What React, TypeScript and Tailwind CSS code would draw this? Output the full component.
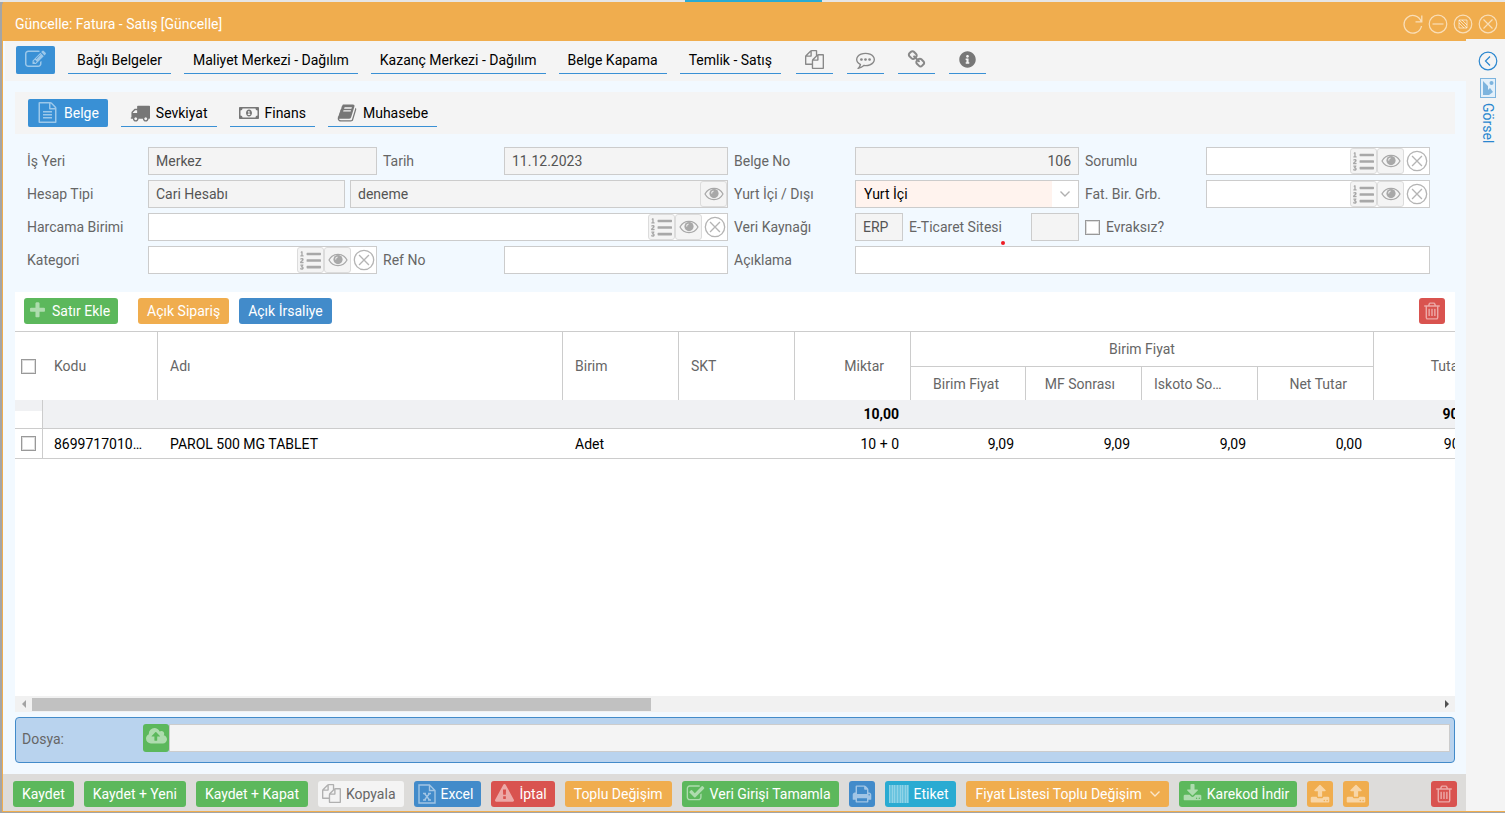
import { useState } from "react";
import type { ReactNode } from "react";
import clsx from "clsx";
import { FaListOl, FaRegMoneyBillAlt, FaInfoCircle } from "react-icons/fa";

const PATHS = {
  edit: "M888 1184l116-116-152-152-116 116v56h96v96h56zm440-720q-16-16-33 1l-350 350q-17 17-1 33t33-1l350-350q17-17 1-33zm80 594v190q0 119-84.5 203.5t-203.5 84.5h-832q-119 0-203.5-84.5t-84.5-203.5v-832q0-119 84.5-203.5t203.5-84.5h832q63 0 117 25 15 7 18 23 3 17-9 29l-49 49q-14 14-32 8-23-6-45-6h-832q-66 0-113 47t-47 113v832q0 66 47 113t113 47h832q66 0 113-47t47-113v-126q0-13 9-22l64-64q15-15 35-7t20 29zm-96-738l288 288-672 672h-288v-288zm444 132l-92 92-288-288 92-92q28-28 68-28t68 28l152 152q28 28 28 68t-28 68z",
  file: "M1596 380q28 28 48 76t20 88v1152q0 40-28 68t-68 28h-1344q-40 0-68-28t-28-68v-1600q0-40 28-68t68-28h896q40 0 88 20t76 48zm-444-244v376h376q-10-29-22-41l-313-313q-12-12-41-22zm384 1528v-1024h-416q-40 0-68-28t-28-68v-416h-768v1536h1280zm-1024-864q0-14 9-23t23-9h704q14 0 23 9t9 23v64q0 14-9 23t-23 9h-704q-14 0-23-9t-9-23v-64zm736 224q14 0 23 9t9 23v64q0 14-9 23t-23 9h-704q-14 0-23-9t-9-23v-64q0-14 9-23t23-9h704zm0 256q14 0 23 9t9 23v64q0 14-9 23t-23 9h-704q-14 0-23-9t-9-23v-64q0-14 9-23t23-9h704z",
  truck: "M640 1408q0-52-38-90t-90-38-90 38-38 90 38 90 90 38 90-38 38-90zm-384-512h384v-256h-158q-13 0-22 9l-195 195q-9 9-9 22v30zm1280 512q0-52-38-90t-90-38-90 38-38 90 38 90 90 38 90-38 38-90zm256-1088v1024q0 15-4 26.5t-13.5 18.5-16.5 11.5-23.5 6-22.5 2-25.5 0-22.5-.5q0 106-75 181t-181 75-181-75-75-181h-384q0 106-75 181t-181 75-181-75-75-181h-64q-3 0-22.5.5t-25.5 0-22.5-2-23.5-6-16.5-11.5-13.5-18.5-4-26.5q0-26 19-45t45-19v-320q0-8-.5-35t0-38 2.5-34.5 6.5-37 14-30.5 22.5-30l198-198q19-19 50.5-32t58.5-13h160v-192q0-26 19-45t45-19h1024q26 0 45 19t19 45z",
  book: "M1703 478q40 57 18 129l-275 906q-19 64-76.5 107.5t-122.5 43.5h-923q-77 0-148.5-53.5t-99.5-131.5q-24-67-2-127 0-4 3-27t4-37q1-8-3-21.5t-3-19.5q2-11 8-21t16.5-23.5 16.5-23.5q23-38 45-91.5t30-91.5q3-10 .5-30t-.5-28q3-11 17-28t17-23q21-36 42-92t25-90q1-9-2.5-32t.5-28q4-13 22-30.5t22-22.5q19-26 42.5-84.5t27.5-96.5q1-8-3-25.5t-2-26.5q2-8 9-18t18-23 17-21q8-12 16.5-30.5t15-35 16-36 19.5-32 26.5-23.5 36-11.5 47.5 5.5l-1 3q38-9 51-9h761q74 0 114 56t18 130l-274 906q-36 119-71.5 153.5t-128.5 34.5h-869q-27 0-38 15-11 16-1 43 24 70 144 70h923q29 0 56-15.5t35-41.5l300-987q7-22 5-57 38 15 59 43zm-1064 2q-4 13 2 22.5t20 9.5h608q13 0 25.5-9.5t16.5-22.5l21-64q4-13-2-22.5t-20-9.5h-608q-13 0-25.5 9.5t-16.5 22.5zm-83 256q-4 13 2 22.5t20 9.5h608q13 0 25.5-9.5t16.5-22.5l21-64q4-13-2-22.5t-20-9.5h-608q-13 0-25.5 9.5t-16.5 22.5z",
  copy: "M1696 384q40 0 68 28t28 68v1216q0 40-28 68t-68 28h-960q-40 0-68-28t-28-68v-288h-544q-40 0-68-28t-28-68v-672q0-40 20-88t48-76l408-408q28-28 76-48t88-20h416q40 0 68 28t28 68v328q68-40 128-40h416zm-544 213l-299 299h299v-299zm-640-384l-299 299h299v-299zm196 647l316-316v-416h-384v416q0 40-28 68t-68 28h-416v640h512v-256q0-40 20-88t48-76zm956 804v-1152h-384v416q0 40-28 68t-68 28h-416v640h896z",
  comment: "M640 896q0 53-37.5 90.5t-90.5 37.5-90.5-37.5-37.5-90.5 37.5-90.5 90.5-37.5 90.5 37.5 37.5 90.5zm384 0q0 53-37.5 90.5t-90.5 37.5-90.5-37.5-37.5-90.5 37.5-90.5 90.5-37.5 90.5 37.5 37.5 90.5zm384 0q0 53-37.5 90.5t-90.5 37.5-90.5-37.5-37.5-90.5 37.5-90.5 90.5-37.5 90.5 37.5 37.5 90.5zm-512-512q-204 0-381.5 69.5t-282 187.5-104.5 255q0 112 71.5 213.5t201.5 175.5l87 50-27 96q-24 91-70 172 152-63 275-171l43-38 57 6q69 8 130 8 204 0 381.5-69.5t282-187.5 104.5-255-104.5-255-282-187.5-381.5-69.5zm896 512q0 174-120 321.5t-326 233-450 85.5q-70 0-145-8-198 175-460 242-49 14-114 22h-5q-15 0-27-10.5t-16-27.5v-1q-3-4-.5-12t2-10 4.5-9.5l6-9 7-8.5 8-9q7-8 31-34.5t34.5-38 31-39.5 32.5-51 27-59 26-76q-157-89-247.5-220t-90.5-281q0-174 120-321.5t326-233 450-85.5 450 85.5 326 233 120 321.5z",
  link: "M1520 1216q0-40-28-68l-208-208q-28-28-68-28-42 0-72 32 3 3 19 18.5t21.5 21.5 15 19 13 25.5 3.5 27.5q0 40-28 68t-68 28q-15 0-27.5-3.5t-25.5-13-19-15-21.5-21.5-18.5-19q-33 31-33 73 0 40 28 68l206 207q27 27 68 27 40 0 68-26l147-146q28-28 28-67zm-703-705q0-40-28-68l-206-207q-28-28-68-28-39 0-68 27l-147 146q-28 28-28 67 0 40 28 68l208 208q27 27 68 27 42 0 72-31-3-3-19-18.5t-21.5-21.5-15-19-13-25.5-3.5-27.5q0-40 28-68t68-28q15 0 27.5 3.5t25.5 13 19 15 21.5 21.5 18.5 19q33-31 33-73zm895 705q0 120-85 203l-147 146q-83 83-203 83-121 0-204-85l-206-207q-83-83-83-203 0-123 88-209l-88-88q-86 88-208 88-120 0-204-84l-208-208q-84-84-84-204t85-203l147-146q83-83 203-83 121 0 204 85l206 207q83 83 83 203 0 123-88 209l88 88q86-88 208-88 120 0 204 84l208 208q84 84 84 204z",
  plus: "M1600 736v192q0 40-28 68t-68 28h-416v416q0 40-28 68t-68 28h-192q-40 0-68-28t-28-68v-416h-416q-40 0-68-28t-28-68v-192q0-40 28-68t68-28h416v-416q0-40 28-68t68-28h192q40 0 68 28t28 68v416h416q40 0 68 28t28 68z",
  trash: "M704 736v576q0 14-9 23t-23 9h-64q-14 0-23-9t-9-23v-576q0-14 9-23t23-9h64q14 0 23 9t9 23zm256 0v576q0 14-9 23t-23 9h-64q-14 0-23-9t-9-23v-576q0-14 9-23t23-9h64q14 0 23 9t9 23zm256 0v576q0 14-9 23t-23 9h-64q-14 0-23-9t-9-23v-576q0-14 9-23t23-9h64q14 0 23 9t9 23zm128 724v-948h-896v948q0 22 7 40.5t14.5 27 10.5 8.5h832q3 0 10.5-8.5t14.5-27 7-40.5zm-672-1076h448l-48-117q-7-9-17-11h-317q-10 2-17 11zm928 32v64q0 14-9 23t-23 9h-96v948q0 83-47 143.5t-113 60.5h-832q-66 0-113-58.5t-47-141.5v-952h-96q-14 0-23-9t-9-23v-64q0-14 9-23t23-9h309l70-167q15-37 54-63t79-26h320q40 0 79 26t54 63l70 167h309q14 0 23 9t9 23z",
  warning: "M1024 1375v-190q0-14-9.5-23.5t-22.5-9.5h-192q-13 0-22.5 9.5t-9.5 23.5v190q0 14 9.5 23.5t22.5 9.5h192q13 0 22.5-9.5t9.5-23.5zm-2-374l18-459q0-12-10-19-13-11-24-11h-220q-11 0-24 11-10 7-10 21l17 457q0 10 10 16.5t24 6.5h185q14 0 23.5-6.5t10.5-16.5zm-14-934l768 1408q35 63-2 126-17 29-46.5 46t-63.5 17h-1536q-34 0-63.5-17t-46.5-46q-37-63-2-126l768-1408q17-31 47-49t65-18 65 18 47 49z",
  check: "M1472 930v318q0 119-84.5 203.5t-203.5 84.5h-832q-119 0-203.5-84.5t-84.5-203.5v-832q0-119 84.5-203.5t203.5-84.5h832q63 0 117 25 15 7 18 23 3 17-9 29l-49 49q-10 10-23 10-3 0-9-2-23-6-45-6h-832q-66 0-113 47t-47 113v832q0 66 47 113t113 47h832q66 0 113-47t47-113v-254q0-13 9-22l64-64q10-10 23-10 6 0 12 3 20 8 20 29zm231-489l-814 814q-24 24-57 24t-57-24l-430-430q-24-24-24-57t24-57l110-110q24-24 57-24t57 24l263 263 647-647q24-24 57-24t57 24l110 110q24 24 24 57t-24 57z",
  print: "M448 1536h896v-256h-896v256zm0-640h896v-384h-160q-40 0-68-28t-28-68v-160h-640v640zm1152 64q0-26-19-45t-45-19-45 19-19 45 19 45 45 19 45-19 19-45zm128 0v416q0 13-9.5 22.5t-22.5 9.5h-224v160q0 40-28 68t-68 28h-960q-40 0-68-28t-28-68v-160h-224q-13 0-22.5-9.5t-9.5-22.5v-416q0-79 56.5-135.5t135.5-56.5h64v-544q0-40 28-68t68-28h672q40 0 88 20t76 48l152 152q28 28 48 76t20 88v256h64q79 0 135.5 56.5t56.5 135.5z",
  cloud: "M1280 864q0-14-9-23l-352-352q-9-9-23-9t-23 9l-351 351q-10 12-10 24 0 14 9 23t23 9h224v352q0 13 9.5 22.5t22.5 9.5h192q13 0 22.5-9.5t9.5-22.5v-352h224q13 0 22.5-9.5t9.5-22.5zm640 288q0 159-112.5 271.5t-271.5 112.5h-1088q-185 0-316.5-131.5t-131.5-316.5q0-130 70-240t188-165q-2-30-2-43 0-212 150-362t362-150q156 0 285.5 87t188.5 231q71-62 166-62 106 0 181 75t75 181q0 76-41 138 130 31 213.5 135.5t83.5 238.5z",
  download: "M1344 1344q0-26-19-45t-45-19-45 19-19 45 19 45 45 19 45-19 19-45zm256 0q0-26-19-45t-45-19-45 19-19 45 19 45 45 19 45-19 19-45zm128-224v320q0 40-28 68t-68 28h-1472q-40 0-68-28t-28-68v-320q0-40 28-68t68-28h465l135 136q58 56 136 56t136-56l136-136h464q40 0 68 28t28 68zm-325-569q17 41-14 70l-448 448q-18 19-45 19t-45-19l-448-448q-31-29-14-70 17-39 59-39h256v-448q0-26 19-45t45-19h256q26 0 45 19t19 45v448h256q42 0 59 39z",
  upload: "M1344 1472q0-26-19-45t-45-19-45 19-19 45 19 45 45 19 45-19 19-45zm256 0q0-26-19-45t-45-19-45 19-19 45 19 45 45 19 45-19 19-45zm128-224v320q0 40-28 68t-68 28h-1472q-40 0-68-28t-28-68v-320q0-40 28-68t68-28h427q21 56 70.5 92t110.5 36h256q61 0 110.5-36t70.5-92h427q40 0 68 28t28 68zm-325-648q-17 40-59 40h-256v448q0 26-19 45t-45 19h-256q-26 0-45-19t-19-45v-448h-256q-42 0-59-40-17-39 14-69l448-448q18-19 45-19t45 19l448 448q31 30 14 69z",
};

function Icon({ name, className }: { name: keyof typeof PATHS; className?: string }) {
  return (
    <svg
      viewBox={name === "cloud" ? "0 0 1920 1792" : "0 0 1792 1792"}
      className={clsx("shrink-0 fill-current", className)}
      aria-hidden="true"
    >
      <path d={PATHS[name]} />
    </svg>
  );
}

function EyeIcon() {
  return (
    <svg viewBox="0 0 20 14" className="h-[14px] w-5" fill="none" aria-hidden="true">
      <path d="M1 7C5 -0.4 15 -0.4 19 7C15 14.4 5 14.4 1 7Z" stroke="#a8a8a8" strokeWidth="1.2" />
      <circle cx="10" cy="6.6" r="4.6" fill="#a8a8a8" />
      <path d="M7.6 6.4a2.4 2.4 0 0 1 2-2.4" stroke="#f0f0f0" strokeWidth="1.2" />
    </svg>
  );
}

// sheet with a folded corner and a small cross with feet
function ExcelIcon() {
  return (
    <svg viewBox="0 0 18 20" className="h-5 w-[18px] fill-none stroke-white/50" strokeWidth="1.4" aria-hidden="true">
      <path d="M1 1h10.500l5.500 5.500V19H1zM11.500 1v5.500H17" />
      <path d="M6.500 9.500l5 6.500M11.500 9.500l-5 6.500M5 9.500h3M10 9.500h3M5 16h3M10 16h3" />
    </svg>
  );
}

function Ring({ children, className }: { children: ReactNode; className?: string }) {
  return (
    <svg
      viewBox="0 0 20 20"
      className={clsx("shrink-0 fill-none stroke-current", className)}
      strokeWidth="1.2"
      aria-hidden="true"
    >
      <circle cx="10" cy="10" r="8.8" />
      {children}
    </svg>
  );
}

const CROSS = <path d="M5.5 5.5l9 9M14.5 5.5l-9 9" />;

function BarcodeIcon() {
  return (
    <svg viewBox="0 0 20 18" className="h-[18px] w-5" aria-hidden="true">
      <rect width="20" height="18" fill="#fff" opacity=".3" />
      {[0, 3, 5, 8, 11, 13, 16, 18].map((x) => (
        <rect key={x} x={x} width="1" height="18" fill="#fff" opacity=".25" />
      ))}
    </svg>
  );
}

function TabButton({
  active,
  label,
  icon,
  iconOnly,
  onClick,
  className = "px-[9px]",
}: {
  active?: boolean;
  label: string;
  icon?: ReactNode;
  iconOnly?: boolean;
  onClick?: () => void;
  className?: string;
}) {
  return (
    <button
      type="button"
      onClick={onClick}
      aria-label={label}
      className={clsx(
        "flex h-7 shrink-0 items-center justify-center gap-1.5 border-b border-[#3990d5]",
        active ? "rounded-[2px] bg-[#3990d5] text-white" : "text-black",
        className
      )}
    >
      {icon}
      {!iconOnly && <span>{label}</span>}
    </button>
  );
}

const btnColors = {
  green: "bg-[#5cb85c] text-white",
  orange: "bg-[#f0ad4e] text-white",
  blue: "bg-[#428bca] text-white",
  red: "bg-[#d9534f] text-white",
  teal: "bg-[#2aabd2] text-white",
  light: "bg-[#f4f4f4] text-[#666]",
};

interface ButtonProps {
  color: keyof typeof btnColors;
  label: string;
  icon?: ReactNode;
  iconOnly?: boolean;
  caret?: boolean;
}

function Button({ color, label, icon, iconOnly, caret }: ButtonProps) {
  return (
    <button
      type="button"
      aria-label={label}
      className={clsx(
        "flex h-[26px] shrink-0 items-center whitespace-nowrap rounded-[3px]",
        btnColors[color],
        iconOnly ? "w-[26px] justify-center" : icon ? "gap-[5px] pl-1 pr-2" : "gap-2 px-[9px]"
      )}
    >
      {icon}
      {!iconOnly && <span>{label}</span>}
      {caret && (
        <svg viewBox="0 0 10 6" className="h-1.5 w-2.5 fill-none stroke-white/70" aria-hidden="true">
          <path d="M0.5 0.5L5 5L9.5 0.5" strokeWidth="1.4" />
        </svg>
      )}
    </button>
  );
}

function LookupButtons({ only }: { only?: boolean }) {
  const box =
    "flex w-[27px] items-center justify-center rounded-[3px] border border-[#dcdcdc] bg-[#f4f4f4] text-[#a8a8a8]";
  return (
    <>
      {!only && (
        <button type="button" aria-label="Liste" className={box}>
          <FaListOl className="size-[21px] shrink-0" />
        </button>
      )}
      <button type="button" aria-label="Göster" className={box}>
        <EyeIcon />
      </button>
      {!only && (
        <button type="button" aria-label="Temizle" className="flex w-[25px] items-center justify-center text-[#b4b4b4]">
          <Ring className="size-[22px]">{CROSS}</Ring>
        </button>
      )}
    </>
  );
}

function Box({
  id,
  label,
  value,
  readOnly,
  lookup,
  right,
  className = "flex-1",
}: {
  id: string;
  label?: string;
  value?: string;
  readOnly?: boolean;
  lookup?: "all" | "eye";
  right?: boolean;
  className?: string;
}) {
  return (
    <div
      className={clsx(
        "flex h-7 min-w-0 border border-[#ccc]",
        readOnly ? "bg-[#f4f4f4]" : "bg-white",
        className
      )}
    >
      <input
        id={id}
        aria-label={label}
        defaultValue={value}
        readOnly={readOnly}
        className={clsx("w-full min-w-0 flex-1 px-[7px] text-[#555] outline-none", right && "text-right")}
      />
      {lookup && <LookupButtons only={lookup === "eye"} />}
    </div>
  );
}

function Field({
  id,
  label,
  className,
  children,
}: {
  id: string;
  label: string;
  className?: string;
  children: ReactNode;
}) {
  return (
    <div className={clsx("flex min-w-0 items-center", className)}>
      <label htmlFor={id} className="w-[121px] shrink-0">
        {label}
      </label>
      {children}
    </div>
  );
}

function Checkbox({ id, label }: { id: string; label?: string }) {
  return (
    <input
      type="checkbox"
      id={id}
      aria-label={label}
      className="block size-[15px] shrink-0 appearance-none border border-[#999] bg-white shadow-[inset_0_0_0_1px_#ddd] checked:bg-[#3990d5]"
    />
  );
}

function Header() {
  return (
    <header className="flex h-[39px] shrink-0 items-center justify-between bg-[#f0ad4e] pl-3 pr-[7px] pt-1 text-white">
      <h1>Güncelle: Fatura - Satış [Güncelle]</h1>
      <div className="flex gap-[5px] text-white/60">
        <button type="button" aria-label="Yenile">
          <svg viewBox="0 0 20 20" className="size-5 fill-none stroke-current" strokeWidth="1.3" aria-hidden="true">
            <path d="M18.2 7.5A8.8 8.8 0 1 0 18.5 12M18.8 1.5v6.3h-6.3" />
          </svg>
        </button>
        <button type="button" aria-label="Küçült">
          <Ring className="size-5"><path d="M4.5 10h11" /></Ring>
        </button>
        <button type="button" aria-label="Büyüt">
          <Ring className="size-5">
            <path d="M6 6h8v8h-8zM6 6l8 8M9 6l5 5M6 9l5 5" strokeWidth="1" />
          </Ring>
        </button>
        <button type="button" aria-label="Kapat">
          <Ring className="size-5">{CROSS}</Ring>
        </button>
      </div>
    </header>
  );
}

const mainTabs = [
  "Bağlı Belgeler",
  "Maliyet Merkezi - Dağılım",
  "Kazanç Merkezi - Dağılım",
  "Belge Kapama",
  "Temlik - Satış",
];

const iconTabs = [
  { label: "Kopyala", icon: <Icon name="copy" className="size-[19px] text-[#888]" /> },
  { label: "Yorumlar", icon: <Icon name="comment" className="size-[19px] text-[#888]" /> },
  { label: "Bağlantı", icon: <Icon name="link" className="size-[19px] text-[#888]" /> },
  { label: "Bilgi", icon: <FaInfoCircle className="size-[17px] text-[#777]" /> },
];

function InvoiceForm() {
  return (
    <form className="grid grid-cols-[350fr_345fr_345fr_345fr] gap-x-1.5 gap-y-[5px] pb-[18px] pl-3 pr-[25px] pt-[13px] text-[#666]">
      <Field id="isyeri" label="İş Yeri">
        <Box id="isyeri" value="Merkez" readOnly />
      </Field>
      <Field id="tarih" label="Tarih">
        <Box id="tarih" value="11.12.2023" readOnly />
      </Field>
      <Field id="belgeno" label="Belge No">
        <Box id="belgeno" value="106" readOnly right />
      </Field>
      <Field id="sorumlu" label="Sorumlu">
        <Box id="sorumlu" lookup="all" />
      </Field>

      <Field id="hesaptipi" label="Hesap Tipi" className="col-span-2">
        <Box id="hesaptipi" value="Cari Hesabı" readOnly className="mr-[5px] w-[197px]" />
        <Box id="hesap" label="Hesap" value="deneme" readOnly lookup="eye" />
      </Field>
      <Field id="yurt" label="Yurt İçi / Dışı">
        <div className="flex h-7 min-w-0 flex-1 items-stretch border border-[#ccc] bg-white">
          <select id="yurt" className="min-w-0 flex-1 appearance-none bg-[#fff3ee] px-2 text-black outline-none">
            <option>Yurt İçi</option>
            <option>Yurt Dışı</option>
          </select>
          <span className="pointer-events-none flex w-[26px] items-center justify-center">
            <svg viewBox="0 0 10 6" className="h-1.5 w-2.5 fill-none stroke-[#b0b0b0]" aria-hidden="true">
              <path d="M0.5 0.5L5 5L9.5 0.5" strokeWidth="1.4" />
            </svg>
          </span>
        </div>
      </Field>
      <Field id="fatgrb" label="Fat. Bir. Grb.">
        <Box id="fatgrb" lookup="all" />
      </Field>

      <Field id="harcama" label="Harcama Birimi" className="col-span-2">
        <Box id="harcama" lookup="all" />
      </Field>
      <Field id="kaynak" label="Veri Kaynağı">
        <Box id="kaynak" value="ERP" readOnly className="w-12" />
        <label htmlFor="site" className="relative min-w-0 flex-1 whitespace-nowrap pl-1.5">
          E-Ticaret Sitesi
          <span className="absolute -bottom-2 left-[98px] size-1 rounded-full bg-[#ee1c24]" />
        </label>
        <Box id="site" readOnly className="w-12" />
      </Field>
      <div className="flex items-center gap-1.5">
        <Checkbox id="evraksiz" />
        <label htmlFor="evraksiz">Evraksız?</label>
      </div>

      <Field id="kategori" label="Kategori">
        <Box id="kategori" lookup="all" />
      </Field>
      <Field id="refno" label="Ref No">
        <Box id="refno" />
      </Field>
      <Field id="aciklama" label="Açıklama" className="col-span-2">
        <Box id="aciklama" />
      </Field>
    </form>
  );
}

const th = "border-l border-[#ccc] px-3 font-normal";
const thRight = "border-l border-[#ccc] pr-[26px] text-right font-normal";

function LinesTable() {
  return (
    <div className="flex-1 overflow-hidden">
      <table className="w-[1474px] table-fixed border-separate border-spacing-0 border-t border-[#ccc]">
        <colgroup>
          <col className="w-[27px]" />
          <col className="w-[115px]" />
          <col className="w-[405px]" />
          <col className="w-[116px]" />
          <col className="w-[116px]" />
          <col className="w-[116px]" />
          <col className="w-[115px]" />
          <col className="w-[116px]" />
          <col className="w-[116px]" />
          <col className="w-[116px]" />
          <col className="w-[116px]" />
        </colgroup>
        <thead className="text-left text-[#666]">
          <tr className="h-[35px]">
            <th rowSpan={2} className="pl-1.5"><Checkbox id="all" label="Tümünü seç" /></th>
            <th rowSpan={2} className="px-3 font-normal">Kodu</th>
            <th rowSpan={2} className={th}>Adı</th>
            <th rowSpan={2} className={th}>Birim</th>
            <th rowSpan={2} className={th}>SKT</th>
            <th rowSpan={2} className={thRight}>Miktar</th>
            <th colSpan={4} className="border-b border-l border-[#ccc] text-center font-normal">Birim Fiyat</th>
            <th rowSpan={2} className={thRight}>Tutar</th>
          </tr>
          <tr className="h-[33px]">
            <th className={thRight}>Birim Fiyat</th>
            <th className={thRight}>MF Sonrası</th>
            <th className="truncate border-l border-[#ccc] pl-3 pr-[30px] font-normal">Iskoto Sonrası</th>
            <th className={thRight}>Net Tutar</th>
          </tr>
        </thead>
        <tbody className="text-black">
          <tr className="h-[29px] bg-[#f0f1f3] text-right font-bold">
            <td className="border-b border-[#ccc] bg-white p-0 align-top">
              <div className="h-[11px] bg-[#f0f1f3]" />
            </td>
            <td className="border-b border-l border-[#ccc]" />
            <td colSpan={3} className="border-b border-[#ccc]" />
            <td className="border-b border-[#ccc] pr-[11px]">10,00</td>
            <td colSpan={4} className="border-b border-[#ccc]" />
            <td className="border-b border-[#ccc] pr-[11px]">90,90</td>
          </tr>
          <tr className="h-[30px] text-right">
            <td className="border-b border-[#ccc] pl-1.5"><Checkbox id="row1" label="Satırı seç" /></td>
            <td className="truncate border-b border-l border-[#ccc] pl-[11px] pr-3 text-left">8699717010123</td>
            <td className="border-b border-[#ccc] px-[13px] text-left">PAROL 500 MG TABLET</td>
            <td className="border-b border-[#ccc] px-[13px] text-left">Adet</td>
            <td className="border-b border-[#ccc]" />
            <td className="border-b border-[#ccc] pr-[11px]">10 + 0</td>
            <td className="border-b border-[#ccc] pr-[11px]">9,09</td>
            <td className="border-b border-[#ccc] pr-[11px]">9,09</td>
            <td className="border-b border-[#ccc] pr-[11px]">9,09</td>
            <td className="border-b border-[#ccc] pr-[11px]">0,00</td>
            <td className="border-b border-[#ccc] pr-[11px]">90,90</td>
          </tr>
        </tbody>
      </table>
    </div>
  );
}

function ScrollBar() {
  return (
    <div className="flex h-4 shrink-0 items-center bg-[#f1f1f1]">
      <span className="flex w-[17px] justify-center">
        <svg viewBox="0 0 4 8" className="h-2 w-1 fill-[#a3a3a3]" aria-hidden="true"><path d="M4 0v8L0 4z" /></svg>
      </span>
      <div className="flex-1">
        <div className="h-[13px] w-[44%] bg-[#c1c1c1]" />
      </div>
      <span className="flex w-[17px] justify-center">
        <svg viewBox="0 0 4 8" className="h-2 w-1 fill-[#505050]" aria-hidden="true"><path d="M0 0v8L4 4z" /></svg>
      </span>
    </div>
  );
}

function Footer() {
  return (
    <footer className="flex h-[37px] shrink-0 items-center gap-2.5 bg-[#dddcda] pl-2.5 pr-[9px] pt-0.5">
      <Button color="green" label="Kaydet" />
      <Button color="green" label="Kaydet + Yeni" />
      <Button color="green" label="Kaydet + Kapat" />
      <Button color="light" label="Kopyala" icon={<Icon name="copy" className="size-[19px] text-[#b0b0b0]" />} />
      <Button color="blue" label="Excel" icon={<ExcelIcon />} />
      <Button color="red" label="İptal" icon={<Icon name="warning" className="size-[19px] text-white/50" />} />
      <Button color="orange" label="Toplu Değişim" />
      <Button color="green" label="Veri Girişi Tamamla" icon={<Icon name="check" className="size-[19px] text-white/50" />} />
      <Button color="blue" label="Yazdır" iconOnly icon={<Icon name="print" className="size-5 text-white/50" />} />
      <Button color="teal" label="Etiket" icon={<BarcodeIcon />} />
      <Button color="orange" label="Fiyat Listesi Toplu Değişim" caret />
      <Button color="green" label="Karekod İndir" icon={<Icon name="download" className="size-[19px] text-white/50" />} />
      <Button color="orange" label="Yükle" iconOnly icon={<Icon name="upload" className="size-5 text-white/50" />} />
      <Button color="orange" label="Gönder" iconOnly icon={<Icon name="upload" className="size-5 text-white/50" />} />
      <div className="flex-1" />
      <Button color="red" label="Sil" iconOnly icon={<Icon name="trash" className="size-5 text-white/50" />} />
    </footer>
  );
}

export default function App() {
  const [tab, setTab] = useState("Belge");

  const subTabs = [
    { name: "Belge", icon: <Icon name="file" className="size-[21px] text-white/50" /> },
    { name: "Sevkiyat", icon: <Icon name="truck" className="size-5 text-[#777]" /> },
    { name: "Finans", icon: <FaRegMoneyBillAlt className="size-5 text-[#777]" /> },
    { name: "Muhasebe", icon: <Icon name="book" className="size-5 text-[#777]" /> },
  ];

  return (
    <div className="flex min-h-screen flex-col bg-[#a5a5a5] pb-px pl-0.5 font-['Roboto',sans-serif] text-sm leading-5">
      {/* strip of the page behind the window */}
      <div className="-ml-0.5 flex h-0.5 shrink-0 bg-[#e6e6e6]">
        <div className="ml-[45.5%] w-[137px] bg-[#2aabd2]" />
      </div>
      <div className="flex flex-1 flex-col rounded-tl-[4px] border-b border-l border-[#f0ad4e] bg-[#f0ad4e]">
        <Header />
        <div className="flex flex-1">
          <main className="flex min-w-0 flex-1 flex-col bg-[#f2f9ff]">
            <nav className="ml-0.5 flex h-10 shrink-0 items-center gap-[13px] bg-[#f4f4f4] pb-0.5 pl-[11px]">
              <TabButton
                active
                iconOnly
                label="Düzenle"
                className="w-[39px]"
                icon={<Icon name="edit" className="size-[21px] text-white/50" />}
              />
              {mainTabs.map((name) => (
                <TabButton key={name} label={name} />
              ))}
              <div className="ml-0.5 flex gap-3.5">
                {iconTabs.map((t) => (
                  <TabButton key={t.label} iconOnly label={t.label} icon={t.icon} className="w-[37px]" />
                ))}
              </div>
            </nav>

            <div className="flex flex-1 flex-col px-3 pb-[11px] pr-[11px] pt-[11px]">
              <nav className="flex h-[42px] shrink-0 items-center gap-[13px] bg-[#f4f4f4] pl-[13px]">
                {subTabs.map((t) => (
                  <TabButton
                    key={t.name}
                    active={tab === t.name}
                    label={t.name}
                    icon={t.icon}
                    onClick={() => setTab(t.name)}
                  />
                ))}
              </nav>

              <InvoiceForm />

              <section className="flex min-w-0 flex-1 flex-col bg-white">
                <div className="flex h-[39px] shrink-0 items-center gap-2.5 pb-0.5 pl-[9px] pr-2.5">
                  <Button color="green" label="Satır Ekle" icon={<Icon name="plus" className="size-[19px] text-white/50" />} />
                  <div className="ml-2.5">
                    <Button color="orange" label="Açık Sipariş" />
                  </div>
                  <Button color="blue" label="Açık İrsaliye" />
                  <div className="flex-1" />
                  <Button color="red" label="Satırı sil" iconOnly icon={<Icon name="trash" className="size-5 text-white/50" />} />
                </div>
                <LinesTable />
                <ScrollBar />
              </section>

              <div className="mt-[5px] flex h-[46px] shrink-0 items-start rounded-[4px] border border-[#428bca] bg-[#b9d3ee] pl-1.5 pr-1 pt-1.5 text-[#666]">
                <label htmlFor="dosya" className="w-[121px] pt-[5px]">Dosya:</label>
                <button
                  type="button"
                  aria-label="Dosya yükle"
                  className="flex h-7 w-[26px] items-start justify-center rounded-[3px] bg-[#5cb85c] pt-0.5 text-white/50"
                >
                  <Icon name="cloud" className="size-[21px]" />
                </button>
                <input id="dosya" readOnly className="h-7 min-w-0 flex-1 border border-[#ccc] bg-[#f4f4f4] px-2 outline-none" />
              </div>
            </div>

            <Footer />
          </main>

          <aside className="-mt-0.5 flex w-[39px] shrink-0 flex-col items-center gap-[7px] bg-[#f4f4f4] pl-1 pt-3 text-[#2a86cf]">
            <button type="button" aria-label="Paneli aç">
              <Ring className="size-5"><path d="M12 5.5L7.5 10l4.500 4.500" /></Ring>
            </button>
            <button type="button" className="flex flex-col items-center gap-[5px]">
              <svg viewBox="0 0 16 20" className="h-5 w-4" aria-hidden="true">
                <rect x=".5" y=".5" width="15" height="19" fill="#e3f0fa" stroke="#7db4de" />
                <path d="M3 3l5 5v4l2-2 3 4-4 3H3z" fill="#7db4de" />
                <circle cx="11.500" cy="5" r="2" fill="#7db4de" />
              </svg>
              <span className="[writing-mode:vertical-rl]">Görsel</span>
            </button>
          </aside>
        </div>
      </div>
    </div>
  );
}
